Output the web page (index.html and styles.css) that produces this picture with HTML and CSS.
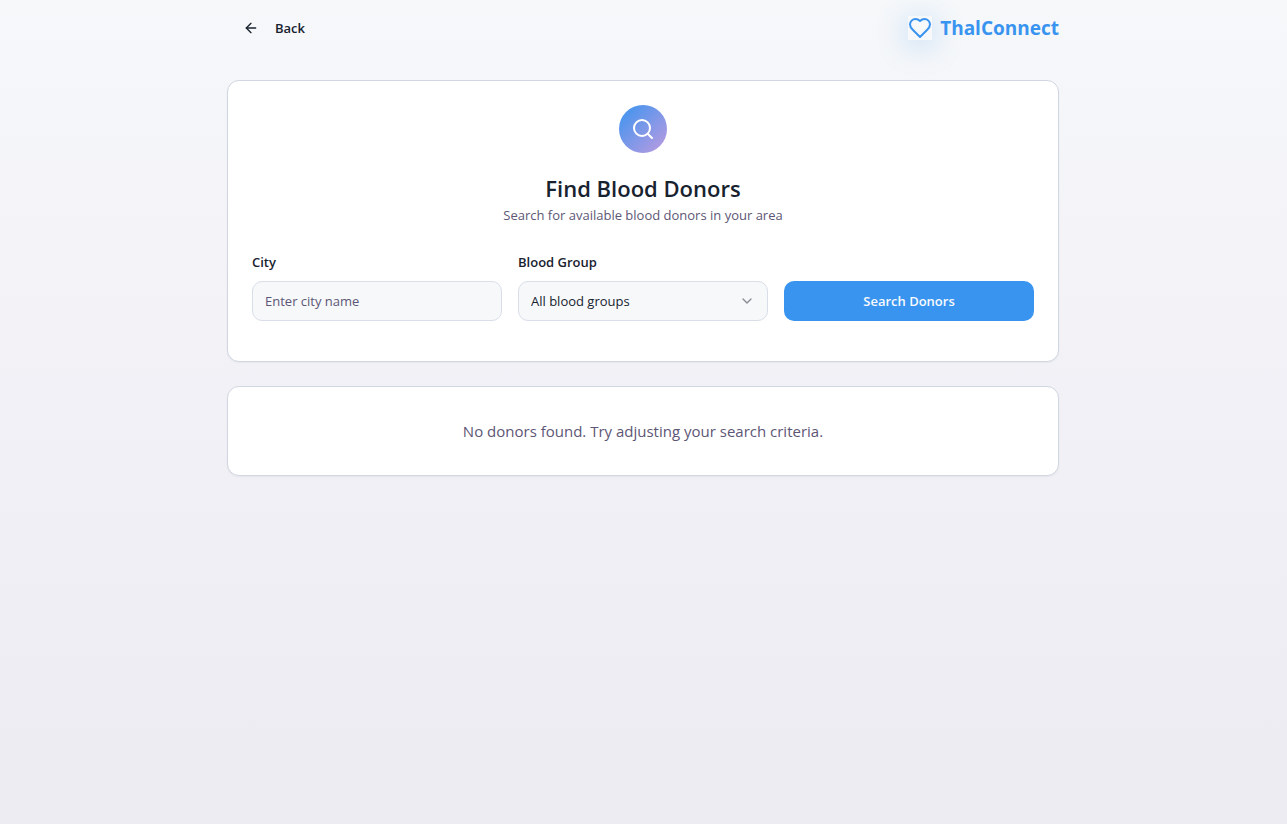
FILE: index.html
```html
<!DOCTYPE html>
<html lang="en">
<head>
<meta charset="utf-8">
<meta name="viewport" content="width=device-width, initial-scale=1">
<title>ThalConnect</title>
<link rel="stylesheet" href="styles.css">
</head>
<body>
<div class="page">
  <header class="topbar">
    <button class="back" type="button">
      <svg class="icon-sm" viewBox="0 0 24 24" aria-hidden="true"><path d="m12 19-7-7 7-7"/><path d="M19 12H5"/></svg>
      Back
    </button>
    <div class="brand">
      <svg class="brand-icon" viewBox="0 0 24 24" aria-hidden="true"><path d="M19 14c1.490-1.460 3-3.210 3-5.500A5.500 5.500 0 0 0 16.500 3c-1.760 0-3 .5-4.500 2-1.500-1.500-2.740-2-4.500-2A5.500 5.500 0 0 0 2 8.500c0 2.300 1.500 4.050 3 5.500l7 7Z"/></svg>
      <span class="brand-name">ThalConnect</span>
    </div>
  </header>
  <main class="content">
    <section class="card search">
      <div class="search-head">
        <div class="badge">
          <svg class="badge-icon" viewBox="0 0 24 24" aria-hidden="true"><circle cx="11" cy="11" r="8"/><path d="m21 21-4.300-4.300"/></svg>
        </div>
        <h1 class="title">Find Blood Donors</h1>
        <p class="subtitle">Search for available blood donors in your area</p>
      </div>
      <form class="search-form">
        <div class="field">
          <label class="label" for="city">City</label>
          <input class="control" id="city" type="text" placeholder="Enter city name">
        </div>
        <div class="field">
          <label class="label" for="group">Blood Group</label>
          <div class="select-wrap">
            <select class="control select" id="group">
              <option>All blood groups</option>
              <option>A+</option><option>A-</option><option>B+</option><option>B-</option>
              <option>AB+</option><option>AB-</option><option>O+</option><option>O-</option>
            </select>
            <svg class="chevron" viewBox="0 0 24 24" aria-hidden="true"><path d="m6 9 6 6 6-6"/></svg>
          </div>
        </div>
        <button class="submit" type="button">Search Donors</button>
      </form>
    </section>
    <section class="card empty">
      <p class="empty-text">No donors found. Try adjusting your search criteria.</p>
    </section>
  </main>
</div>
</body>
</html>
```
FILE: styles.css
```css
* { box-sizing: border-box; }

body {
  margin: 0;
  min-height: 100vh;
  background: linear-gradient(180deg, #f6f8fa 0%, #f3f3f8 30%, #edecf2 90%);
  color: #18222f;
  font-family: "Segoe UI", "Open Sans", "Noto Sans", sans-serif;
  font-size: 13px;
  line-height: 20px;
}

svg {
  fill: none;
  stroke: currentColor;
  stroke-width: 2;
  stroke-linecap: round;
  stroke-linejoin: round;
}

h1, p { margin: 0; }

.page {
  max-width: 865px;
  margin: 0 auto;
  padding: 8px 17px 8px 16px;
}

.topbar {
  display: flex;
  align-items: center;
  justify-content: space-between;
  margin-bottom: 32px;
}

.back {
  display: flex;
  align-items: center;
  gap: 16px;
  height: 40px;
  padding: 0 16px;
  border: 0;
  background: none;
  color: inherit;
  font: inherit;
  font-weight: 600;
}

.icon-sm { width: 16px; height: 16px; }

.brand {
  display: flex;
  align-items: center;
  gap: 8px;
  color: #3994f0;
}

.brand-icon {
  width: 24px;
  height: 24px;
  background: #f6f8fa;
  box-shadow: 0 4px 30px rgba(57, 148, 240, 0.35);
}

.brand-name {
  font-size: 19px;
  font-weight: 700;
  line-height: 28px;
}

.content { display: grid; gap: 24px; }

.card {
  background: #fff;
  border: 1px solid #d0d6e2;
  border-radius: 12px;
  box-shadow: 0 1px 2px rgba(0, 0, 0, 0.05);
}

.search { padding: 24px 24px 40px; }

.search-head {
  display: flex;
  flex-direction: column;
  align-items: center;
  text-align: center;
  margin-bottom: 26px;
}

.badge {
  display: grid;
  place-items: center;
  width: 48px;
  height: 48px;
  margin-bottom: 20px;
  border-radius: 50%;
  background: linear-gradient(135deg, #3994f0, #bf9be0);
  color: #fff;
}

.badge-icon { width: 24px; height: 24px; }

.title {
  margin-bottom: 2px;
  font-size: 22px;
  font-weight: 600;
  line-height: 30px;
}

.subtitle, .empty-text { color: #5d5675; }

.search-form {
  display: grid;
  grid-template-columns: repeat(3, 1fr);
  gap: 16px;
  align-items: end;
}

.field { display: grid; gap: 8px; }

.label { font-weight: 600; line-height: 22px; }

.control {
  display: block;
  width: 100%;
  height: 40px;
  padding: 0 12px;
  border: 1px solid #d9dee8;
  border-radius: 10px;
  background: #f6f8fa;
  color: inherit;
  font: inherit;
}

.control::placeholder { color: #5d5675; opacity: 1; }

.select-wrap { position: relative; }

.select { appearance: none; padding-right: 36px; }

.chevron {
  position: absolute;
  top: 12px;
  right: 13px;
  width: 16px;
  height: 16px;
  color: #868b92;
  pointer-events: none;
}

.submit {
  height: 40px;
  border: 0;
  border-radius: 10px;
  background: #3994f0;
  color: #f8fafc;
  font: inherit;
  font-weight: 600;
}

.empty { padding: 32px 24px; text-align: center; }

.empty-text { font-size: 15px; line-height: 24px; }

@media (max-width: 700px) {
  .search-form { grid-template-columns: 1fr; }
}
```
